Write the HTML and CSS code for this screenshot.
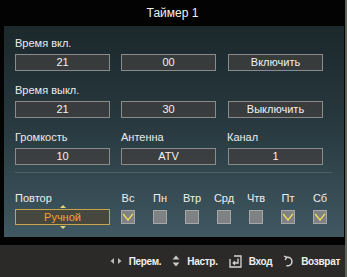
FILE: index.html
```html
<!DOCTYPE html>
<html lang="ru">
<head>
  <meta charset="UTF-8" />
  <title>Таймер 1</title>
  <link rel="stylesheet" href="styles.css">
</head>
<body>
  <div class="screen">
    <header class="title-bar">Таймер 1</header>

    <div class="panel">
      <div class="label">Время вкл.</div>
      <div class="row">
        <div class="field">21</div>
        <div class="field">00</div>
        <div class="field">Включить</div>
      </div>

      <div class="label">Время выкл.</div>
      <div class="row">
        <div class="field">21</div>
        <div class="field">30</div>
        <div class="field">Выключить</div>
      </div>

      <div class="row labels">
        <div class="label">Громкость</div>
        <div class="label">Антенна</div>
        <div class="label">Канал</div>
      </div>
      <div class="row">
        <div class="field">10</div>
        <div class="field">ATV</div>
        <div class="field">1</div>
      </div>

      <div class="divider"></div>

      <div class="repeat-row">
        <div class="repeat">
          <div class="label">Повтор</div>
          <div class="arrow up"></div>
          <div class="field selected">Ручной</div>
          <div class="arrow down"></div>
        </div>
        <div class="days">
          <div class="day"><span>Вс</span><i class="check"><svg width="12" height="12" viewBox="0 0 12 12"><polyline points="1.2,3 6,9.2 11,2.6" /></svg></i></div>
          <div class="day"><span>Пн</span><i class="check"></i></div>
          <div class="day"><span>Втр</span><i class="check"></i></div>
          <div class="day"><span>Срд</span><i class="check"></i></div>
          <div class="day"><span>Чтв</span><i class="check"></i></div>
          <div class="day"><span>Пт</span><i class="check"><svg width="12" height="12" viewBox="0 0 12 12"><polyline points="1.2,3 6,9.2 11,2.6" /></svg></i></div>
          <div class="day"><span>Сб</span><i class="check"><svg width="12" height="12" viewBox="0 0 12 12"><polyline points="1.2,3 6,9.2 11,2.6" /></svg></i></div>
        </div>
      </div>
    </div>

    <footer class="hints">
      <div class="hint">
        <svg width="12" height="8" viewBox="0 0 12 8"><path d="M4 1L0.5 4L4 7Z M8 1L11.5 4L8 7Z" fill="#b8b8b8"/></svg>
        <span>Перем.</span>
      </div>
      <div class="hint">
        <svg width="8" height="12" viewBox="0 0 8 12"><path d="M4 0.5L7.5 4.5H0.5Z M4 11.5L7.5 7.5H0.5Z" fill="#c8c8c8"/></svg>
        <span>Настр.</span>
      </div>
      <div class="hint">
        <svg width="13" height="13" viewBox="0 0 13 13" fill="none" stroke="#d8d8d8" stroke-width="1.3"><path d="M1 4V12H12V1H5"/><path d="M9 3.5V8H4.5"/><path d="M6 6.3L4.2 8L6 9.7"/></svg>
        <span>Вход</span>
      </div>
      <div class="hint">
        <svg width="11" height="12" viewBox="0 0 11 12" fill="none" stroke="#d8d8d8" stroke-width="1.4"><path d="M3.4 2.4A4.3 4.3 0 1 1 3.4 10.6"/><path d="M1 1L3.6 2.4L2.2 5"/></svg>
        <span>Возврат</span>
      </div>
    </footer>
  </div>
</body>
</html>
```

FILE: styles.css
```css
* {
  margin: 0;
  padding: 0;
  box-sizing: border-box;
}

body {
  width: 347px;
  height: 277px;
  background: #5f6759;
  font-family: "Liberation Sans", Arial, sans-serif;
  color: #eeeeee;
  overflow: hidden;
}

.screen {
  width: 345px;
  height: 277px;
  background: #030303;
  display: flex;
  flex-direction: column;
}

.title-bar {
  height: 26px;
  line-height: 27px;
  text-align: center;
  font-size: 12px;
  color: #f2f2f2;
}

.panel {
  height: 211px;
  margin: 0 1px 0 4px;
  padding: 10px 0 0 11px;
  background: linear-gradient(#1b282c, #27383e 45%, #405862);
}

.label {
  font-size: 11px;
  line-height: 14px;
  height: 14px;
  color: #ececec;
  margin-bottom: 4px;
}

.row {
  display: flex;
  gap: 11px;
  margin-bottom: 12px;
}

.row .field:nth-child(3) {
  margin-left: 1px;
}

.row.labels {
  margin-bottom: 0;
}

.row.labels .label {
  width: 95px;
}

.field {
  width: 95px;
  height: 17px;
  border: 1px solid #8b8b8b;
  background: rgba(62, 62, 62, 0.82);
  text-align: center;
  font-size: 11px;
  line-height: 15px;
  color: #f2f2f2;
}

.divider {
  width: 317px;
  height: 1px;
  margin-top: -5px;
  background: #1f2b30;
  border-bottom: 1px solid #4d6169;
}

.repeat-row {
  display: flex;
  margin-top: 18px;
}

.repeat {
  width: 95px;
  display: flex;
  flex-direction: column;
  align-items: center;
}

.repeat .label {
  align-self: flex-start;
  margin-bottom: 0;
}

.arrow {
  width: 0;
  height: 0;
  border-left: 3px solid transparent;
  border-right: 3px solid transparent;
}

.arrow.up {
  border-bottom: 3px solid #e6d276;
  margin: 0 0 1px;
}

.arrow.down {
  border-top: 3px solid #e6d276;
  margin-top: 1px;
}

.field.selected {
  height: 16px;
  line-height: 14px;
  border-color: #c9a347;
  background: rgba(72, 70, 60, 0.9);
  color: #f0a434;
}

.days {
  display: flex;
  margin-left: 2px;
}

.day {
  width: 32px;
  display: flex;
  flex-direction: column;
  align-items: center;
}

.day span {
  font-size: 11px;
  line-height: 14px;
  height: 14px;
  margin-bottom: 5px;
}

.check {
  display: block;
  width: 14px;
  height: 14px;
  border: 1px solid #a7a7a7;
  background: #7e8285;
}

.check svg {
  display: block;
  fill: none;
  stroke: #f0da5c;
  stroke-width: 1.4;
}

.hints {
  margin-top: 8px;
  flex: 1;
  background: #2c2a28;
  display: flex;
  justify-content: flex-end;
  align-items: center;
  gap: 11px;
  padding: 0 5px 0 0;
}

.hint {
  display: flex;
  align-items: center;
  gap: 7px;
}

.hint span {
  font-size: 10px;
  font-weight: bold;
  letter-spacing: -0.3px;
  color: #f0f0f0;
}
```
